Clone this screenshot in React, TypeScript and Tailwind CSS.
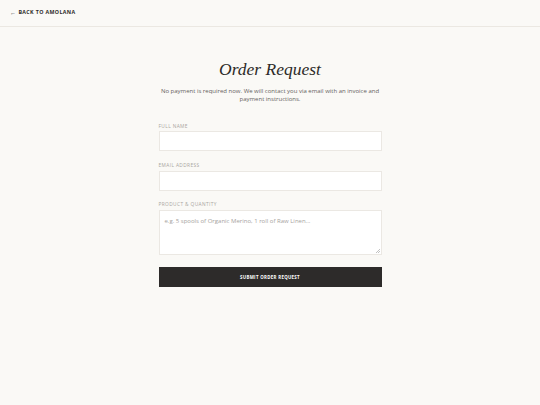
import React from "react";

export default function App() {
  return (
    <div className="min-h-[405px] w-full bg-[#faf9f6] text-[#2d2b29]" style={{ fontFamily: '"Open Sans", "Noto Sans", sans-serif' }}>
      <header className="h-[27px] border-b border-[#ebe8e2] flex items-center px-[10px]">
        <a className="flex items-center gap-[2px] text-[5.3px] font-bold tracking-[0.07em] uppercase text-[#2d2b29] leading-none">
          <span className="text-[6px] font-normal">←</span>
          <span>Back to Amolana</span>
        </a>
      </header>
      <main className="flex justify-center">
        <div className="w-[223px] flex flex-col pt-[34px]">
          <h1 className="text-center text-[17.5px] italic leading-none text-[#2d2b29]" style={{ fontFamily: '"Liberation Serif", "DejaVu Serif", serif' }}>
            Order Request
          </h1>
          <p className="mt-[8px] text-center text-[6px] leading-[8px] text-[#66625e]">
            No payment is required now. We will contact you via email with an invoice and payment instructions.
          </p>
          <div className="mt-[21px] flex flex-col">
            <label className="text-[4.8px] uppercase tracking-[0.08em] text-[#a9a5a0] leading-none">Full Name</label>
            <div className="mt-[3px] h-[20px] bg-white border border-[#ebe8e3]" />
            <label className="mt-[11.5px] text-[4.8px] uppercase tracking-[0.08em] text-[#a9a5a0] leading-none">Email Address</label>
            <div className="mt-[3px] h-[20px] bg-white border border-[#ebe8e3]" />
            <label className="mt-[11.5px] text-[4.8px] uppercase tracking-[0.08em] text-[#a9a5a0] leading-none">Product &amp; Quantity</label>
            <div className="relative mt-[3px] h-[45px] bg-white border border-[#ebe8e3] px-[5px] pt-[7px] leading-none text-[6px]">
              <span className="text-[6px] text-[#a6a3a0] leading-none">e.g. 5 spools of Organic Merino, 1 roll of Raw Linen...</span>
              <svg className="absolute right-[1px] bottom-[1px]" width="4" height="4" viewBox="0 0 4 4">
                <path d="M4 0 L0 4 M4 2 L2 4" stroke="#999" strokeWidth="0.6" />
              </svg>
            </div>
            <button className="mt-[12px] h-[20px] bg-[#2d2b2a] text-white text-[4.4px] font-bold uppercase tracking-[0.07em] flex items-center justify-center">
              Submit Order Request
            </button>
          </div>
        </div>
      </main>
    </div>
  );
}
